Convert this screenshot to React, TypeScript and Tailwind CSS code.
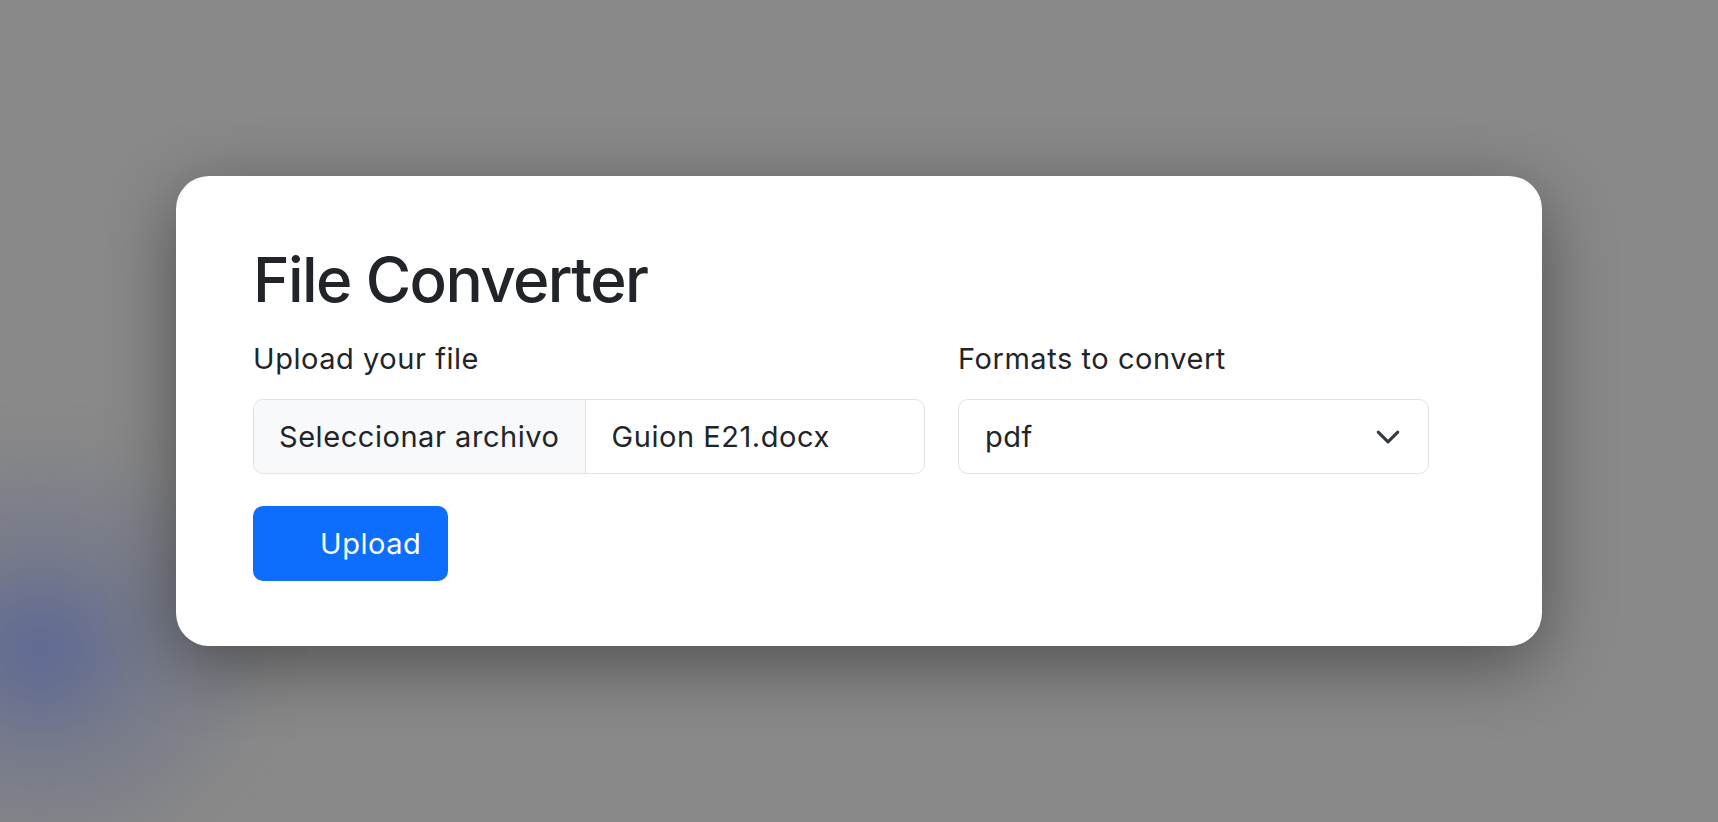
import { useState } from 'react'

const FORMATS = ['pdf', 'docx', 'txt', 'odt', 'html']

function ChevronDown() {
  return (
    <svg width="26" height="26" viewBox="0 0 16 16" fill="none" aria-hidden="true">
      <path d="m2 5 6 6 6-6" stroke="#343a40" strokeWidth="1.9" strokeLinecap="round" strokeLinejoin="round" />
    </svg>
  )
}

export default function App() {
  const [format] = useState(FORMATS[0])

  return (
    <div
      className="relative flex min-h-[822px] w-full items-start justify-center overflow-hidden bg-[#898989] pt-[176px] text-[#212529]"
      style={{ fontFamily: 'Inter, "Noto Sans", sans-serif' }}
    >
      {/* bluish blur behind the window, bottom-left */}
      <div className="pointer-events-none absolute left-[-200px] top-[430px] h-[440px] w-[480px] rounded-full bg-[radial-gradient(closest-side,_rgba(88,100,150,0.9)_0%,_rgba(100,108,140,0.5)_45%,_transparent_100%)] blur-[20px]" />

      <div className="relative w-[1366px] rounded-[33px] bg-white px-[77px] pb-[65px] pt-[67px] shadow-[0_18px_70px_rgba(0,0,0,0.42)]">
        <h1 className="text-[62px] font-medium leading-[74px] tracking-[-1.6px]">File Converter</h1>

        <div className="mt-[21px] flex gap-[33px] text-[29px] tracking-[0.55px]">
          <div className="w-[672px]">
            <label className="block leading-[42px]">Upload your file</label>
            <div className="mt-[19px] flex h-[75px] overflow-hidden rounded-[10px] border border-[#dee2e6]">
              <span className="flex items-center border-r border-[#dee2e6] bg-[#f8f9fa] px-[25px]">Seleccionar archivo</span>
              <span className="flex flex-1 items-center px-[26px]">Guion E21.docx</span>
            </div>
          </div>

          <div className="w-[471px]">
            <label className="block leading-[42px]">Formats to convert</label>
            <div className="mt-[19px] flex h-[75px] items-center justify-between rounded-[10px] border border-[#dee2e6] pl-[26px] pr-[27px]">
              <span>{format}</span>
              <ChevronDown />
            </div>
          </div>
        </div>

        <button
          type="button"
          className="mt-[32px] flex h-[75px] w-[195px] items-center rounded-[10px] bg-[#0d6efd] pl-[67px] text-[29px] tracking-[0.55px] text-white"
        >
          Upload
        </button>
      </div>
    </div>
  )
}
